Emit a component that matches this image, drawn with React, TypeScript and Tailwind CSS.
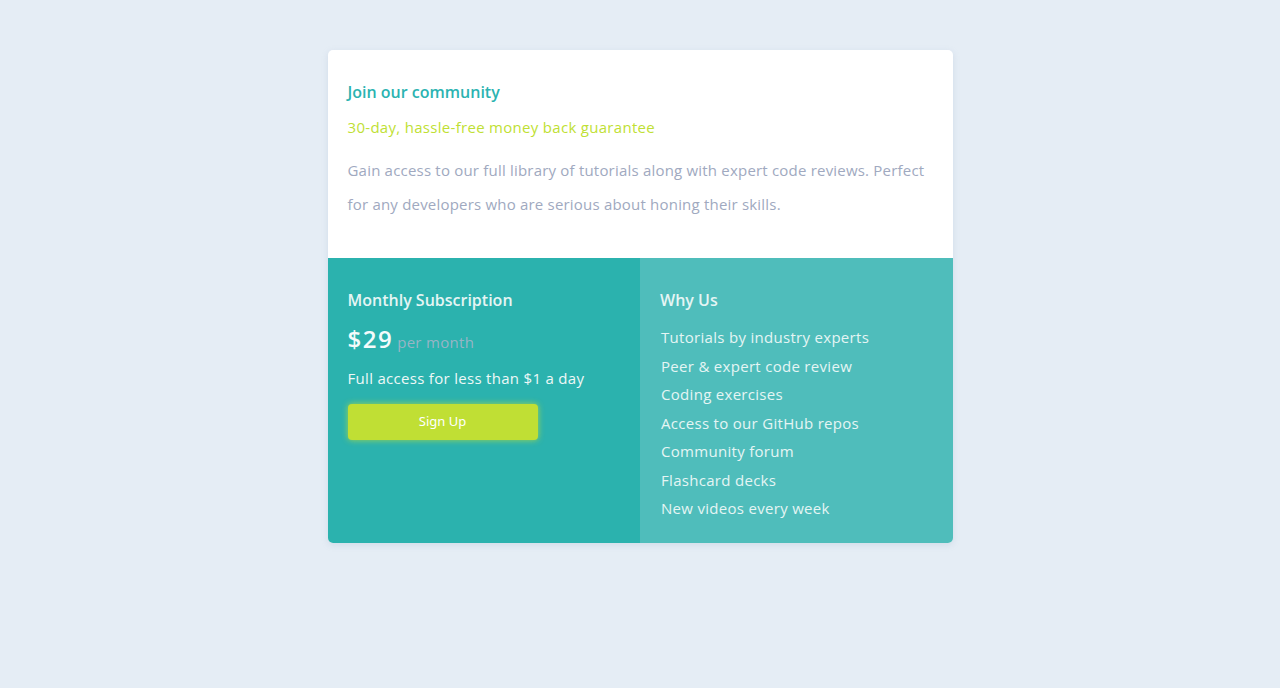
export default function App() {
  const features = [
    "Tutorials by industry experts",
    "Peer & expert code review",
    "Coding exercises",
    "Access to our GitHub repos",
    "Community forum",
    "Flashcard decks",
    "New videos every week",
  ];

  return (
    <div className="min-h-[688px] w-full bg-[#e5edf5] pt-[50px] font-['Open_Sans',sans-serif]">
      <div className="mx-auto w-[625px] overflow-hidden rounded-[5px] bg-white shadow-[0_2px_6px_rgba(150,170,200,0.25)]">

        {/* Top */}

        <div className="px-5 pt-[30px] pb-[37px]">
          <h1 className="text-[16px] font-semibold leading-[24px] text-[#2bb3b1]">
            Join our community
          </h1>

          <p className="mt-[11px] text-[15px] leading-[24px] tracking-[0.3px] text-[#c0df34]">
            30-day, hassle-free money back guarantee
          </p>

          <p className="mt-[14px] text-[15px] leading-[34px] tracking-[0.2px] text-[#a0a9c0]">
            Gain access to our full library of tutorials along with expert code reviews. Perfect for any developers who are serious about honing their skills.
          </p>
        </div>

        {/* Bottom */}

        <div className="grid grid-cols-2">

          <div className="bg-[#2bb2ae] px-5 pt-[30px] pb-5">
            <h2 className="text-[16px] font-semibold leading-[24px] text-[#e5f5f4]">
              Monthly Subscription
            </h2>

            <div className="mt-[13px] flex items-baseline gap-[4px]">
              <span className="text-[24px] font-semibold leading-[28px] tracking-[1.5px] text-[#f4fbfb]">
                $29
              </span>
              <span className="text-[15px] tracking-[0.3px] text-[#a6b5c9]/90">
                per month
              </span>
            </div>

            <p className="mt-[13px] text-[15px] leading-[22px] tracking-[0.3px] text-[#eef8f7]">
              Full access for less than $1 a day
            </p>

            <button className="mt-[15px] h-9 w-[190px] rounded-[4px] bg-[#c0df34] font-['Noto_Sans',sans-serif] text-[13px] text-white shadow-[0_0_6px_rgba(192,223,52,0.8)]">
              Sign Up
            </button>
          </div>

          <div className="bg-[#4fbdbb] px-5 pt-[30px] pb-5">
            <h2 className="text-[16px] font-semibold leading-[24px] text-[#e5f5f4]">
              Why Us
            </h2>

            <ul className="mt-[11px] pl-px">
              {features.map((f) => (
                <li
                  key={f}
                  className="text-[15px] leading-[28.5px] tracking-[0.3px] text-[#e5f5f4]"
                >
                  {f}
                </li>
              ))}
            </ul>
          </div>

        </div>

      </div>
    </div>
  );
}
